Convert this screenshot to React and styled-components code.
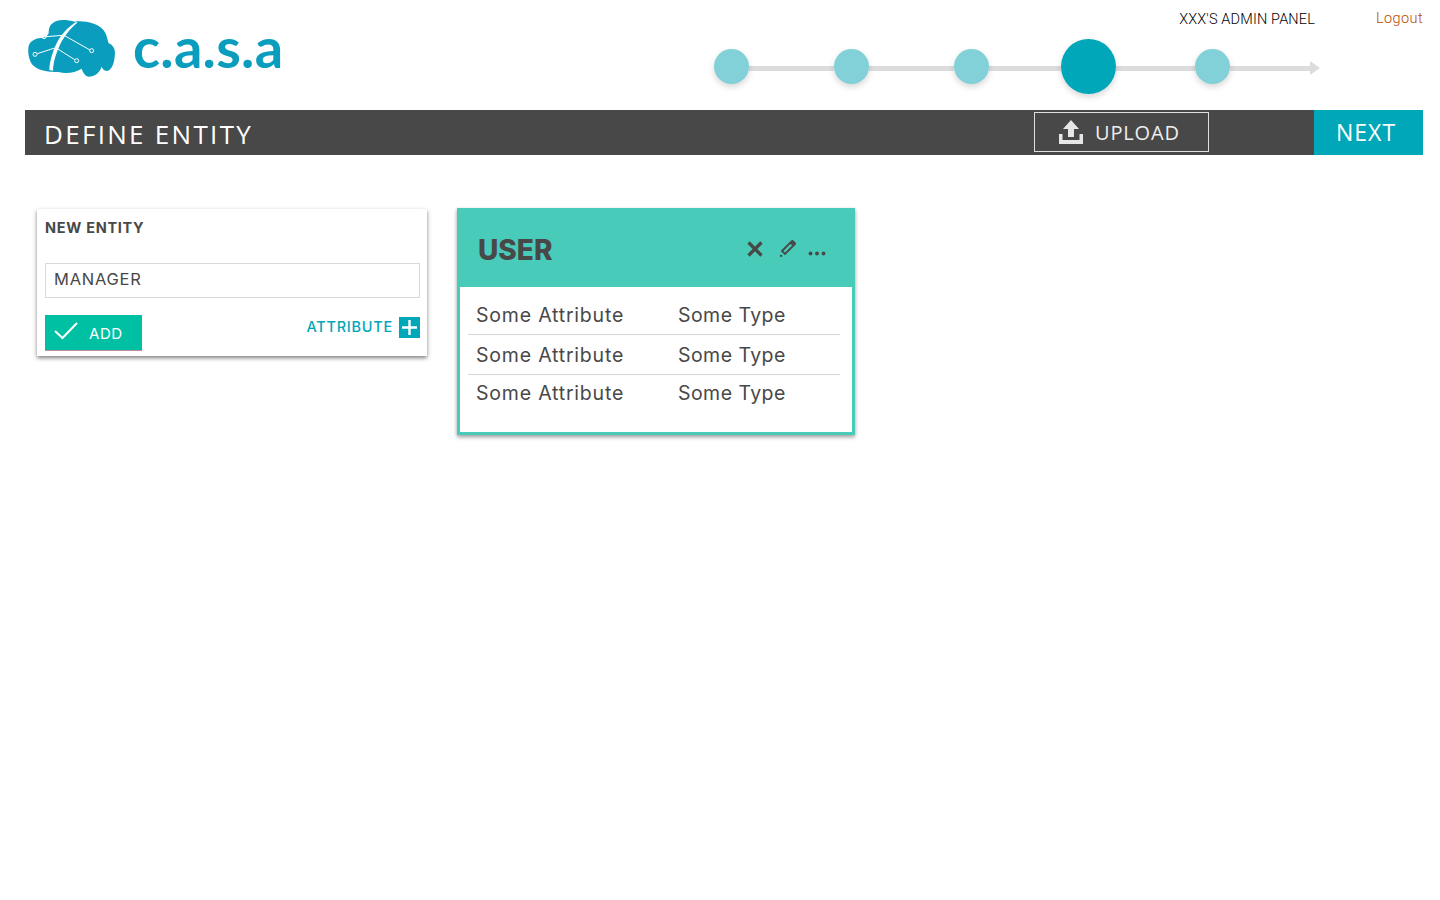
import { createGlobalStyle, styled } from "styled-components";
import { Fragment } from "react";

const GlobalStyle = createGlobalStyle`
  html, body { margin: 0; padding: 0; background: #fff; }
  body { font-family: "Inter", "Liberation Sans", sans-serif; color: #484848; }
  * { box-sizing: border-box; }
`;

const Page = styled.div`
  min-height: 900px;
  padding: 0 17px 0 25px;
`;

/* Header */
const Header = styled.header`
  display: flex;
  justify-content: space-between;
  height: 110px;
`;

const Brand = styled.div`
  display: flex;
  align-items: flex-start;
  padding: 18px 0 0 2px;
`;

const BrandName = styled.span`
  font-family: "Lato", sans-serif;
  font-size: 56px;
  font-weight: 700;
  line-height: 60px;
  letter-spacing: 0.3px;
  color: #0a9dbd;
  margin: -1px 0 0 16px;
`;

const HeaderRight = styled.div`
  width: 709px;
  display: flex;
  flex-direction: column;
`;

const TopLinks = styled.div`
  display: flex;
  justify-content: flex-end;
  align-items: center;
  height: 16px;
  margin-top: 10px;
  font-family: "Roboto", sans-serif;
  font-weight: 300;
`;

const PanelName = styled.span`
  font-size: 14.5px;
  color: #000;
  margin: 2px 61px 0 0;
  letter-spacing: 0.15px;
`;

const Logout = styled.a`
  font-size: 14.5px;
  color: #b84a00;
  letter-spacing: 0.4px;
`;

const Stepper = styled.div`
  display: flex;
  align-items: center;
  margin-top: 13px;
  height: 55px;
`;

const Step = styled.div`
  flex: none;
  width: ${(p) => (p.$active ? "55px" : "35px")};
  height: ${(p) => (p.$active ? "55px" : "35px")};
  border-radius: 50%;
  background: ${(p) => (p.$active ? "#00a7b8" : "#82d0d8")};
  box-shadow: 0 3px 6px rgba(0, 0, 0, 0.16);
  position: relative;
  z-index: 1;
`;

const StepLink = styled.div`
  flex: none;
  height: 5px;
  width: ${(p) => p.$w}px;
  margin-top: 3px;
  background: #dcdcdc;
`;

const ArrowHead = styled.div`
  flex: none;
  margin-top: 3px;
  width: 0;
  height: 0;
  border-left: 10px solid #dcdcdc;
  border-top: 7.5px solid transparent;
  border-bottom: 7.5px solid transparent;
`;

/* Dark title bar */
const Bar = styled.div`
  display: flex;
  align-items: stretch;
  height: 45px;
  background: #484848;
  color: #fff;
`;

const BarTitle = styled.h1`
  margin: 0;
  padding: 5px 0 0 19px;
  font-family: "Open Sans", sans-serif;
  font-size: 26px;
  font-weight: 400;
  line-height: 38px;
  letter-spacing: 2.3px;
  flex: 1;
`;

const UploadButton = styled.button`
  display: flex;
  align-items: center;
  gap: 12px;
  width: 175px;
  height: 40px;
  margin: 2px 105px 0 0;
  padding: 0 0 0 24px;
  background: transparent;
  border: 1px solid #dedede;
  color: #eee;
  font-family: "Open Sans", sans-serif;
  font-size: 20px;
  font-weight: 400;
  letter-spacing: 0.85px;
`;

const NextButton = styled.button`
  width: 109px;
  padding: 0 0 2px 22px;
  text-align: left;
  background: #00a7b8;
  border: 0;
  color: #fff;
  font-family: "Open Sans", sans-serif;
  font-size: 23px;
  font-weight: 400;
  letter-spacing: 1px;
`;

/* Cards */
const Content = styled.main`
  display: flex;
  align-items: flex-start;
  gap: 30px;
  padding: 53px 0 0 12px;
`;

const EntityForm = styled.section`
  width: 390px;
  height: 147px;
  margin-top: 1px;
  padding: 10px 7px 0 8px;
  background: #fff;
  box-shadow: 0 2px 4px rgba(0, 0, 0, 0.5);
`;

const FormTitle = styled.h2`
  margin: 0;
  font-size: 14.5px;
  font-weight: 700;
  line-height: 18px;
  letter-spacing: 0.7px;
  color: #484848;
`;

const NameInput = styled.input`
  display: block;
  width: 375px;
  height: 35px;
  margin-top: 26px;
  padding: 0 8px 3px;
  border: 1px solid #d8d8d8;
  outline: 0;
  font-family: "Inter", sans-serif;
  font-size: 16.5px;
  color: #484848;
  letter-spacing: 0.75px;
`;

const FormActions = styled.div`
  display: flex;
  justify-content: space-between;
  margin-top: 17px;
`;

const AddButton = styled.button`
  display: flex;
  align-items: center;
  gap: 11px;
  width: 97px;
  height: 36px;
  padding: 2px 0 0 9px;
  background: #00c0a3;
  border: 0;
  border-bottom: 1px solid #c08a96;
  color: #fff;
  font-family: "Inter", sans-serif;
  font-size: 15px;
  letter-spacing: 0.6px;

  svg {
    margin-top: -6px;
  }
`;

const AttributeLink = styled.a`
  display: flex;
  align-items: center;
  gap: 6px;
  height: 23px;
  font-size: 14.5px;
  font-weight: 500;
  letter-spacing: 0.75px;
  line-height: 19px;
  color: #00a7b8;
`;

const PlusBox = styled.span`
  display: flex;
  align-items: center;
  justify-content: center;
  width: 21px;
  height: 21px;
  margin-top: 2px;
  background: #00a7b8;
`;

const EntityCard = styled.section`
  width: 398px;
  height: 227px;
  border: 3px solid #48cbb8;
  border-top: 0;
  background: #fff;
  box-shadow: 0 2px 4px rgba(0, 0, 0, 0.4);
`;

const CardHeader = styled.div`
  display: flex;
  align-items: center;
  height: 79px;
  margin: 0 -3px;
  padding: 0 29px 0 21px;
  background: #48cbb8;
`;

const CardTitle = styled.h2`
  margin: 5px 0 0;
  flex: 1;
  font-size: 28px;
  font-weight: 800;
  color: #484848;
`;

const CardIcons = styled.div`
  display: flex;
  align-items: center;
  gap: 12px;
  margin-top: 2px;

  svg:first-child {
    margin-right: 4px;
  }
`;

const Rows = styled.div`
  padding: 8px 12px 0 8px;
`;

const Row = styled.div`
  display: grid;
  grid-template-columns: 202px 1fr;
  height: ${(p) => p.$h}px;
  padding: ${(p) => (p.$last ? "6px" : "8px")} 0 0 8px;
  line-height: 24px;
  font-size: 19.5px;
  color: #484848;
  letter-spacing: 0.8px;
  border-bottom: ${(p) => (p.$last ? "0" : "1px solid #d2dad8")};
`;

const TypeCell = styled.span`
  letter-spacing: 0.45px;
`;

function CloudLogo() {
  return (
    <svg width="90" height="60" viewBox="21 24 270 180" style={{ flex: "none" }}>
      <path
        fill="#0a9dbd"
        d="M95 42 C105 30 130 25 165 35 C190 30 235 40 250 60 C262 75 262 90 266 100 C280 105 288 120 284 140 C282 165 272 182 260 183 C250 182 246 172 244 170 C242 185 225 200 205 200 C195 198 188 185 185 176 C165 188 140 192 115 186 C90 186 55 184 38 165 C25 150 22 120 27 105 C32 92 48 85 62 84 C72 84 84 78 86 68 C86 56 90 46 95 42 Z"
      />
      <path
        fill="#fff"
        d="M168 36 C145 50 120 75 105 110 C95 135 88 160 88 180 L99 182 C100 155 108 130 122 100 C132 80 150 55 172 38 Z"
      />
      <g stroke="#fff" strokeWidth="3" fill="none">
        <path d="M128 76 L78 80" />
        <path d="M132 76 L210 120" />
        <path d="M104 114 L52 131" />
        <path d="M112 116 L164 149" />
        <circle cx="72" cy="80" r="6" />
        <circle cx="215" cy="122" r="6" />
        <circle cx="45" cy="133" r="6" />
        <circle cx="170" cy="152" r="6" />
      </g>
    </svg>
  );
}

function UploadIcon() {
  return (
    <svg width="24" height="24" viewBox="0 0 24 24" fill="#e6e6e6" style={{ flex: "none" }}>
      <path d="M12 0 L20 9 H15 V17 H9 V9 H4 Z" />
      <path d="M0 14 H3.5 V20 H20.5 V14 H24 V24 H0 Z" />
    </svg>
  );
}

function CheckIcon() {
  return (
    <svg width="24" height="18" viewBox="0 0 24 18" fill="none" stroke="#fff" strokeWidth="2" style={{ flex: "none" }}>
      <path d="M1 9 L8.5 16 L23 1" />
    </svg>
  );
}

function PlusIcon() {
  return (
    <svg width="15" height="15" viewBox="0 0 15 15" stroke="#fff" strokeWidth="2.4">
      <path d="M7.5 0 V15 M0 7.5 H15" />
    </svg>
  );
}

function CloseIcon() {
  return (
    <svg width="16" height="16" viewBox="0 0 16 16" stroke="#484848" strokeWidth="3.2">
      <path d="M1.5 1.5 L14.5 14.5 M14.5 1.5 L1.5 14.5" />
    </svg>
  );
}

function PencilIcon() {
  return (
    <svg width="17" height="17" viewBox="0 0 17 17" fill="none" stroke="#484848" strokeWidth="1.8">
      <path d="M3 11 L11.5 2.5 L14.5 5.5 L6 14 Z" />
      <path fill="#484848" d="M12.5 1.5 L13.5 0.8 L16.2 3.5 L15.5 4.5 Z" />
      <path d="M1 16.2 L3.2 15.6" />
    </svg>
  );
}

function DotsIcon() {
  return (
    <svg width="18" height="18" viewBox="0 0 18 18" fill="#484848">
      <circle cx="2.5" cy="13.5" r="1.9" />
      <circle cx="9" cy="13.5" r="1.9" />
      <circle cx="15.5" cy="13.5" r="1.9" />
    </svg>
  );
}

const steps = [
  { link: 85 },
  { link: 85 },
  { link: 72 },
  { link: 79, active: true },
  { link: 80 },
];

const attributes = [
  { h: 40 },
  { h: 40 },
  { h: 38, last: true },
];

export default function App() {
  return (
    <Page>
      <GlobalStyle />
      <Header>
        <Brand>
          <CloudLogo />
          <BrandName>c.a.s.a</BrandName>
        </Brand>
        <HeaderRight>
          <TopLinks>
            <PanelName>XXX'S ADMIN PANEL</PanelName>
            <Logout>Logout</Logout>
          </TopLinks>
          <Stepper>
            {steps.map((s, i) => (
              <Fragment key={i}>
                <Step $active={s.active} />
                <StepLink $w={s.link} />
              </Fragment>
            ))}
            <ArrowHead />
          </Stepper>
        </HeaderRight>
      </Header>

      <Bar>
        <BarTitle>DEFINE ENTITY</BarTitle>
        <UploadButton>
          <UploadIcon />
          UPLOAD
        </UploadButton>
        <NextButton>NEXT</NextButton>
      </Bar>

      <Content>
        <EntityForm>
          <FormTitle>NEW ENTITY</FormTitle>
          <NameInput readOnly value="MANAGER" />
          <FormActions>
            <AddButton>
              <CheckIcon />
              ADD
            </AddButton>
            <AttributeLink>
              ATTRIBUTE
              <PlusBox>
                <PlusIcon />
              </PlusBox>
            </AttributeLink>
          </FormActions>
        </EntityForm>

        <EntityCard>
          <CardHeader>
            <CardTitle>USER</CardTitle>
            <CardIcons>
              <CloseIcon />
              <PencilIcon />
              <DotsIcon />
            </CardIcons>
          </CardHeader>
          <Rows>
            {attributes.map((a, i) => (
              <Row key={i} $h={a.h} $last={a.last}>
                <span>Some Attribute</span>
                <TypeCell>Some Type</TypeCell>
              </Row>
            ))}
          </Rows>
        </EntityCard>
      </Content>
    </Page>
  );
}
